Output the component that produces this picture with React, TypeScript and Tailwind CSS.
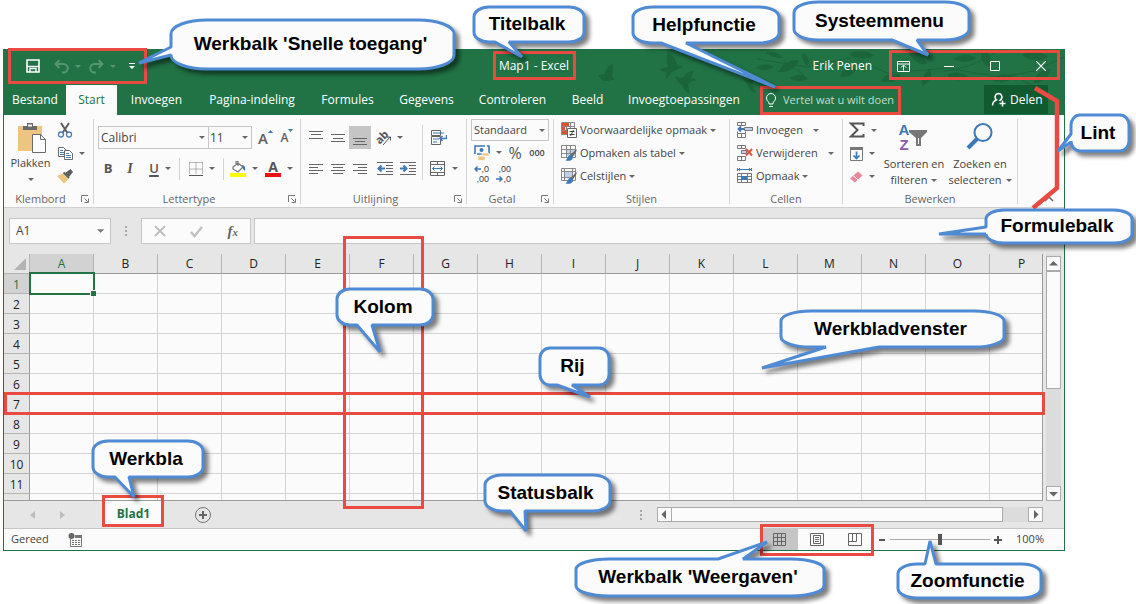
import type { ReactNode } from 'react'

const COLS = 'ABCDEFGHIJKLMNOP'.split('')
const ROWS = Array.from({ length: 11 }, (_, i) => i + 1)

const TABS = [
  { label: 'Bestand', width: 'w-[62px]' },
  { label: 'Start', width: 'w-[51px]' },
  { label: 'Invoegen', width: 'w-[79px]' },
  { label: 'Pagina-indeling', width: 'w-[112px]' },
  { label: 'Formules', width: 'w-[79px]' },
  { label: 'Gegevens', width: 'w-[79px]' },
  { label: 'Controleren', width: 'w-[93px]' },
  { label: 'Beeld', width: 'w-[57px]' },
  { label: 'Invoegtoepassingen', width: 'w-[136px]' },
]

function Caret({ className = 'text-[#666666]' }: { className?: string }) {
  return (
    <svg width="6" height="3" viewBox="0 0 6 3" className={`shrink-0 ${className}`} aria-hidden="true">
      <path d="M0 0h6L3 3z" fill="currentColor" />
    </svg>
  )
}

function Icon({ size = 16, children }: { size?: number; children: ReactNode }) {
  return (
    <svg width={size} height={size} viewBox={`0 0 ${size} ${size}`} fill="none" className="shrink-0" aria-hidden="true">
      {children}
    </svg>
  )
}

/* ---------- title bar and ribbon tabs ---------- */

function Leaves() {
  return (
    <svg
      className="pointer-events-none absolute top-0 right-0"
      width="470"
      height="48"
      viewBox="0 0 470 48"
      fill="#1c653b"
      aria-hidden="true"
    >
      <path d="M4 26c3-1 5 0 7-1 0-4 3-8 8-10-1 4 1 8-1 12l3 4c-5-1-7 2-11 1-3-1-4-4-6-6z" />
      <path d="M65 20c4 0 6-2 9-2-2-5-2-10 0-15 6 5 9 9 9 14 3-1 5 0 6 2-5 0-8 3-11 4-2 2-3 5-6 7 0-3 1-5 0-7-3 0-6-1-7-3z" />
      <path d="M81 27c4 2 6 2 9 1 2-4 6-6 10-6-2 3-2 5-3 7 3 0 5 1 6 3-4-1-7 1-9 3l2 10c-4-2-7-5-8-9-3-2-6-5-7-9z" />
      <path d="M148 29c4 2 6 3 9 1l4 1c-3 2-3 4-2 7l3 6c-4-1-7-4-8-8z" />
      <path d="M172 3c8-1 14 2 17 6-7 0-13-1-17-6zM184 23c5-9 12-12 21-12-3 8-10 13-21 12zM161 19c8-5 14-4 19-1-6 4-12 4-19 1zM196 29c8-5 14-4 18 1-7 3-13 3-18-1zM209 4c-2 6 1 10 5 13 2-6 0-10-5-13z" />
      <path d="M163 10l50 8 45-10M190 12l20 14M258 8l35 16 60-5 70 12" stroke="#1c653b" fill="none" />
      <path d="M255 5c10-5 20-3 25 2-9 4-18 3-25-2zM246 28c2-8 10-12 18-12-2 8-9 13-18 12zM287 32c4-7 12-9 20-6-5 7-13 9-20 6zM315 3c3 9 10 13 18 12-3-8-9-12-18-12z" />
      <path d="M328 37c-1-8 3-14 8-17 3 8 0 13-8 17zM360 10c8-6 16-5 22-1-7 5-15 5-22 1zM353 26c8-5 17-3 22 3-9 4-17 3-22-3zM388 0c-3 9 1 16 8 19 3-8 0-15-8-19zM398 31c6-6 15-7 22-3-6 6-14 7-22 3zM428 6c10-6 19-4 26 2-9 5-18 4-26-2zM440 34c1-9 8-14 17-14-2 9-8 14-17 14z" />
      <path d="M350 22c30-2 50-20 60-22M395 30l45-8 30-14M420 26l24 14" stroke="#1c653b" fill="none" />
    </svg>
  )
}

function TitleBar() {
  return (
    <div className="relative grid h-[34px] grid-cols-[1fr_auto_1fr] items-center">
      <div className="flex items-center pl-[22px] text-[#599475]">
        <button aria-label="Opslaan" className="text-white">
          <Icon size={14}>
            <path d="M1 1h12v12H1z" stroke="currentColor" strokeWidth="1.6" />
            <path d="M1 7.500h12" stroke="currentColor" strokeWidth="1.400" />
            <path d="M4 13v-3.500h6V13" stroke="currentColor" strokeWidth="1.400" />
          </Icon>
        </button>
        <button aria-label="Ongedaan maken" className="ml-[14px] flex items-center gap-[6px]">
          <Icon size={15}>
            <path d="M5.500 1L1.500 5l4 4M2 5h7.500a4 4 0 0 1 0 8.500H8" stroke="currentColor" strokeWidth="2" />
          </Icon>
          <Caret className="text-[#599475]" />
        </button>
        <button aria-label="Opnieuw" className="ml-[8px] flex items-center gap-[6px]">
          <Icon size={15}>
            <path d="M9.500 1l4 4-4 4M13 5H5.500a4 4 0 0 0 0 8.500H7" stroke="currentColor" strokeWidth="2" />
          </Icon>
          <Caret className="text-[#599475]" />
        </button>
        <button aria-label="Werkbalk aanpassen" className="ml-[13px] text-white">
          <svg width="6" height="6" viewBox="0 0 6 6" aria-hidden="true">
            <path d="M0 0h6v1H0zM0 3h6L3 6z" fill="currentColor" />
          </svg>
        </button>
      </div>
      <h1 className="text-[12px] leading-[16px]">Map1 - Excel</h1>
      <div className="flex items-center justify-end">
        <span className="mr-[8px]">Erik Penen</span>
        <button aria-label="Weergaveopties voor lint" className="flex w-[46px] justify-center">
          <Icon size={13}>
            <path d="M.5 1.500h12v10H.5zM.5 4h12M6.500 10.500v-5M4 7.500L6.500 5 9 7.500" stroke="currentColor" />
          </Icon>
        </button>
        <button aria-label="Minimaliseren" className="flex w-[46px] justify-center">
          <Icon size={10}>
            <path d="M0 5.500h10" stroke="currentColor" />
          </Icon>
        </button>
        <button aria-label="Maximaliseren" className="flex w-[46px] justify-center">
          <Icon size={10}>
            <path d="M.5.5h9v9h-9z" stroke="currentColor" />
          </Icon>
        </button>
        <button aria-label="Sluiten" className="flex w-[46px] justify-center">
          <Icon size={10}>
            <path d="M0 0l10 10M10 0L0 10" stroke="currentColor" strokeWidth="1.200" />
          </Icon>
        </button>
      </div>
    </div>
  )
}

function TabBar() {
  return (
    <div className="relative flex h-[32px] items-end">
      {TABS.map(tab => (
        <button
          key={tab.label}
          className={`h-[30px] shrink-0 whitespace-nowrap text-center ${tab.width} ${
            tab.label === 'Start' ? 'bg-[#fbfbfb] text-[#217346]' : ''
          }`}
        >
          {tab.label}
        </button>
      ))}
      <label className="ml-[13px] flex h-[30px] w-[138px] items-center gap-[6px] text-[11px] text-[#c5dccf]">
        <svg width="12" height="15" viewBox="0 0 12 15" fill="none" stroke="#ffffff" className="shrink-0" aria-hidden="true">
          <path d="M4 11V9.500C2 8 1.500 6.500 1.500 5a4.500 4.500 0 0 1 9 0C10.500 6.500 10 8 8 9.500V11zM4 13.500h4" />
        </svg>
        <input
          aria-label="Vertel wat u wilt doen"
          placeholder="Vertel wat u wilt doen"
          className="w-full min-w-0 bg-transparent outline-none placeholder:text-[#c5dccf]"
        />
      </label>
      <button className="mr-[16px] mb-px ml-auto flex h-[29px] w-[64px] items-center gap-[4px] bg-[#115a30] pl-[7px]">
        <Icon size={15}>
          <path
            d="M7.500 1.500a3.500 3.500 0 0 1 2 6.300L8.500 9M7.500 1.500a3.500 3.500 0 0 0-2 6.300C3 9 1.500 11 1.500 13.500M11.500 8.500v6M8.500 11.500h6"
            stroke="currentColor"
            strokeWidth="1.500"
          />
        </Icon>
        Delen
      </button>
    </div>
  )
}

/* ---------- ribbon ---------- */

function Group({
  label,
  width,
  launcher = false,
  children,
}: {
  label: string
  width: string
  launcher?: boolean
  children: ReactNode
}) {
  return (
    <section aria-label={label} className={`flex h-[85px] shrink-0 flex-col border-r border-[#d4d4d4] ${width}`}>
      <div className="h-[75px]">{children}</div>
      <div className="flex h-[10px] items-center text-[11px] leading-[10px] text-[#666666]">
        <span className="flex-1 text-center">{label}</span>
        {launcher && (
          <button aria-label={`${label} instellingen`} className="w-[16px] pl-[4px]">
            <Icon size={8}>
              <path d="M.5 7V.5H7M3.500 3.500l3 3M7.500 3.500v4h-4" stroke="#777777" />
            </Icon>
          </button>
        )}
      </div>
    </section>
  )
}

function IconButton({
  label,
  caret = false,
  active = false,
  width = 'w-[22px]',
  children,
}: {
  label: string
  caret?: boolean
  active?: boolean
  width?: string
  children: ReactNode
}) {
  return (
    <button
      aria-label={label}
      className={`flex h-[23px] shrink-0 items-center justify-center gap-[6px] ${width} ${active ? 'bg-[#c5c5c5]' : ''}`}
    >
      {children}
      {caret && <Caret />}
    </button>
  )
}

function Divider() {
  return <span className="h-[22px] w-px shrink-0 bg-[#d4d4d4]" />
}

function ClipboardGroup() {
  return (
    <Group label="Klembord" width="w-[90px]" launcher>
      <div className="flex">
        <button className="flex w-[53px] flex-col items-center pt-[3px]">
          <Icon size={32}>
            <path d="M3 4h24v25H3z" fill="#edc580" />
            <path d="M8 8V4h4V1h6v3h4v4z" fill="#6a6a6a" />
            <path d="M13 2.500h4v2h-4z" fill="#fbfbfb" />
            <path d="M17.500 12.500h8l5 5v13h-13z" fill="#fbfbfb" stroke="#6a6a6a" />
            <path d="M25.500 12.500v5h5" stroke="#6a6a6a" />
          </Icon>
          <span className="leading-[18px]">Plakken</span>
          <span className="mt-[6px]">
            <Caret />
          </span>
        </button>
        <div className="flex flex-col gap-px">
          <button aria-label="Knippen" className="flex h-[22px] items-center">
            <Icon>
              <path d="M4 1l6.500 10M12 1L5.500 11" stroke="#5f5f5f" strokeWidth="2" />
              <circle cx="4" cy="12.500" r="2.500" stroke="#4a7ebb" strokeWidth="1.300" />
              <circle cx="12" cy="12.500" r="2.500" stroke="#4a7ebb" strokeWidth="1.300" />
            </Icon>
          </button>
          <button aria-label="Kopiëren" className="flex h-[22px] items-center gap-[6px]">
            <Icon>
              <path d="M1.500 2.500h5l3 3v6h-8z" stroke="#6a6a6a" fill="#fff" />
              <path d="M3 5.500h3M3 7.500h4M3 9.500h4" stroke="#4a7ebb" />
              <path d="M7.500 5.500h5l3 3v6h-8z" stroke="#6a6a6a" fill="#fff" />
              <path d="M9 8.500h3M9 10.500h5M9 12.500h5" stroke="#4a7ebb" />
            </Icon>
            <Caret />
          </button>
          <button aria-label="Opmaak kopiëren" className="flex h-[22px] items-center">
            <Icon>
              <path d="M8 5l4 4 4-5-2.500-3z" fill="#5f5f5f" />
              <path d="M6.500 4.500l5.500 5.500" stroke="#5f5f5f" strokeWidth="2" />
              <path d="M6 5.500l5.500 5.500L7 15.500 0 8z" fill="#edc580" />
            </Icon>
          </button>
        </div>
      </div>
    </Group>
  )
}

function FontGroup() {
  return (
    <Group label="Lettertype" width="w-[207px]" launcher>
      <div className="flex items-center pt-[7px] pl-[4px]">
        <div className="relative">
          <select
            aria-label="Lettertype"
            className="h-[23px] w-[111px] appearance-none border border-[#c6c6c6] bg-[#fbfbfb] pl-[2px] text-[12px]"
          >
            <option>Calibri</option>
          </select>
          <span className="pointer-events-none absolute top-[10px] right-[4px]">
            <Caret />
          </span>
        </div>
        <div className="relative -ml-px">
          <select
            aria-label="Tekengrootte"
            className="h-[23px] w-[44px] appearance-none border border-[#c6c6c6] bg-[#fbfbfb] pl-[1px] text-[12px]"
          >
            <option>11</option>
          </select>
          <span className="pointer-events-none absolute top-[10px] right-[4px]">
            <Caret />
          </span>
        </div>
        <button aria-label="Tekengrootte vergroten" className="ml-[6px] flex w-[20px] items-start text-[15px] leading-[20px] font-semibold text-[#5f5f5f]">
          A
          <svg width="5" height="3" viewBox="0 0 5 3" className="mt-[2px]">
            <path d="M0 3h5L2.500 0z" fill="#3d78b8" />
          </svg>
        </button>
        <button aria-label="Tekengrootte verkleinen" className="ml-[3px] flex w-[20px] items-start text-[12px] leading-[22px] font-semibold text-[#5f5f5f]">
          A
          <svg width="5" height="3" viewBox="0 0 5 3" className="mt-[2px]">
            <path d="M0 0h5L2.500 3z" fill="#3d78b8" />
          </svg>
        </button>
      </div>
      <div className="flex items-center pt-[8px] pl-[3px] text-[13px] text-[#555555]">
        <IconButton label="Vet">
          <b>B</b>
        </IconButton>
        <IconButton label="Cursief">
          <i className="font-['Liberation_Serif'] text-[14px] font-bold">I</i>
        </IconButton>
        <IconButton label="Onderstrepen" caret width="w-[38px]">
          <u className="font-semibold decoration-2 underline-offset-2">U</u>
        </IconButton>
        <Divider />
        <IconButton label="Randen" caret width="w-[43px]">
          <Icon size={14}>
            <path d="M.5.5h13M.5 7h13M.5.5v12M7 .5v12M13.500.5v12" stroke="#777777" strokeDasharray="1 1" />
            <path d="M0 13.500h14" stroke="#555555" />
          </Icon>
        </IconButton>
        <Divider />
        <IconButton label="Opvulkleur" caret width="w-[40px]">
          <Icon size={16}>
            <path d="M3 6l5-4 5 4-5 5-5-3zM6 4V.5h2V5" stroke="#777777" strokeWidth="1.200" />
            <path d="M12 4c3 0 3.500 3 3 6l-2-2z" fill="#3d78b8" />
            <path d="M0 12h16v4H0z" fill="#ffff00" />
          </Icon>
        </IconButton>
        <IconButton label="Tekstkleur" caret width="w-[30px]">
          <span className="border-b-4 border-[#ee1111] px-[3px] text-[14px] leading-[13px] font-bold">A</span>
        </IconButton>
      </div>
    </Group>
  )
}

function Lines({ d }: { d: string }) {
  return (
    <Icon size={14}>
      <path d={d} stroke="#666666" />
    </Icon>
  )
}

function AlignmentGroup() {
  return (
    <Group label="Uitlijning" width="w-[166px]" launcher>
      <div className="flex h-full">
        <div className="flex flex-col gap-[8px] pt-[7px] pl-[4px]">
          <div className="flex">
            <IconButton label="Boven uitlijnen">
              <Lines d="M0 .5h14M2 3.500h10M0 7.500h14" />
            </IconButton>
            <IconButton label="Midden uitlijnen">
              <Lines d="M0 3.500h14M2 7.500h10M0 10.500h14" />
            </IconButton>
            <IconButton label="Onder uitlijnen" active>
              <Lines d="M0 7.500h14M2 10.500h10M0 13.500h14" />
            </IconButton>
            <IconButton label="Afdrukstand" caret width="w-[36px]">
              <span className="flex items-center">
                <span className="-rotate-45 text-[11px] font-bold text-[#555555]">ab</span>
                <svg width="8" height="12" viewBox="0 0 8 12" fill="none" stroke="#555555" className="-ml-[5px] mt-[4px]">
                  <path d="M0 11l7-8M4 3h3.500v3.500" />
                </svg>
              </span>
            </IconButton>
          </div>
          <div className="flex">
            <IconButton label="Links uitlijnen">
              <Lines d="M0 2.500h14M0 5.500h9M0 8.500h14M0 11.500h9" />
            </IconButton>
            <IconButton label="Centreren">
              <Lines d="M0 2.500h14M2 5.500h10M0 8.500h14M2 11.500h10" />
            </IconButton>
            <IconButton label="Rechts uitlijnen">
              <Lines d="M0 2.500h14M5 5.500h9M0 8.500h14M5 11.500h9" />
            </IconButton>
            <IconButton label="Inspringing verkleinen" width="w-[28px]">
              <Icon>
                <path d="M0 1.500h16M9 4.500h7M9 7.500h7M9 10.500h7M0 13.500h16" stroke="#666666" />
                <path d="M8 7.500H2M4.500 4.500l-3 3 3 3" stroke="#3d78b8" strokeWidth="2" />
              </Icon>
            </IconButton>
            <IconButton label="Inspringing vergroten" width="w-[18px]">
              <Icon>
                <path d="M0 1.500h16M9 4.500h7M9 7.500h7M9 10.500h7M0 13.500h16" stroke="#666666" />
                <path d="M0 7.500h6M3.500 4.500l3 3-3 3" stroke="#3d78b8" strokeWidth="2" />
              </Icon>
            </IconButton>
          </div>
        </div>
        <span className="mt-[6px] ml-[5px] h-[55px] w-px bg-[#d4d4d4]" />
        <div className="flex flex-col gap-[8px] pt-[7px] pl-[7px]">
          <IconButton label="Tekstterugloop" width="w-[17px]">
            <Icon>
              <path d="M.5.5h9v5h-9zM.5 6.500h9v8h-9z" stroke="#666666" />
              <path d="M2 3h11M2 9h6M2 12h4" stroke="#3d78b8" />
              <path d="M15.500 5v3.500H9M11.500 6L9 8.500l2.500 2.500" stroke="#3d78b8" strokeWidth="1.500" />
            </Icon>
          </IconButton>
          <IconButton label="Samenvoegen en centreren" caret width="w-[28px]">
            <Icon>
              <path d="M.5.5h14v14H.5zM.5 3.500h14M.5 11.500h14M7.500.5v3M7.500 11.500v3" stroke="#666666" />
              <path d="M2.500 7.500h10M4.500 5.500l-2 2 2 2M10.500 5.500l2 2-2 2" stroke="#3d78b8" />
            </Icon>
          </IconButton>
        </div>
      </div>
    </Group>
  )
}

function NumberGroup() {
  return (
    <Group label="Getal" width="w-[87px]" launcher>
      <div className="relative ml-[4px] w-[78px]">
        <select aria-label="Getalnotatie" className="h-[22px] w-full appearance-none border border-[#c6c6c6] bg-[#fbfbfb] pl-[2px]">
          <option>Standaard</option>
        </select>
        <span className="pointer-events-none absolute top-[10px] right-[4px]">
          <Caret />
        </span>
      </div>
      <div className="flex items-center pl-[6px]">
        <IconButton label="Financiële notatie" caret width="w-[30px]">
          <Icon>
            <path d="M1 1h14v8H1z" stroke="#3d78b8" strokeWidth="1.600" strokeDasharray="10 2" />
            <circle cx="7.500" cy="5" r="2" fill="#3d78b8" />
            <path d="M8 8h7v3H8zM4 11h7v4.500H4z" fill="#edc580" stroke="#fbfbfb" strokeWidth=".7" />
          </Icon>
        </IconButton>
        <IconButton label="Procentnotatie" width="w-[24px]">
          <span className="text-[16px] text-[#555555]">%</span>
        </IconButton>
        <IconButton label="Duizendtalnotatie" width="w-[20px]">
          <span className="text-[9px] font-semibold">000</span>
        </IconButton>
      </div>
      <div className="flex pl-[4px] font-['Liberation_Sans',Arial,sans-serif] text-[9px] leading-[10px]">
        <button aria-label="Meer decimalen" className="flex w-[18px] flex-col items-end">
          <span className="flex items-center">
            <svg width="7" height="6" viewBox="0 0 7 6" fill="none" stroke="#3d78b8" strokeWidth="1.500">
              <path d="M7 3H1M3.500.5L1 3l2.500 2.500" />
            </svg>
            ,0
          </span>
          <span>,00</span>
        </button>
        <button aria-label="Minder decimalen" className="ml-[4px] flex w-[18px] flex-col items-end">
          <span>,00</span>
          <span className="flex items-center">
            <svg width="7" height="6" viewBox="0 0 7 6" fill="none" stroke="#3d78b8" strokeWidth="1.500">
              <path d="M0 3h6M3.500.5L6 3 3.500 5.500" />
            </svg>
            ,0
          </span>
        </button>
      </div>
    </Group>
  )
}

function MenuRow({ label, gap = 'gap-[3px]', children }: { label: string; gap?: string; children: ReactNode }) {
  return (
    <button className={`flex h-[22px] items-center whitespace-nowrap text-[#444444] ${gap}`}>
      <span className="flex items-center gap-[3px]">
        {children}
        {label}
      </span>
      <Caret />
    </button>
  )
}

function Brush() {
  return (
    <>
      <path d="M15.500 4l-6 6 2 2 4-6z" fill="#666666" />
      <path d="M8.500 10c3 0 4 2 3 4-1.500 2-4 2-7 1.500 2-1 2-4.500 4-5.500z" fill="#3d78b8" />
    </>
  )
}

function StylesGroup() {
  return (
    <Group label="Stijlen" width="w-[176px]">
      <div className="flex flex-col gap-px pl-[7px]">
        <MenuRow label="Voorwaardelijke opmaak">
          <Icon>
            <path d="M.5.5h13v12H.5zM.5 4.500h13M.5 8.500h13M5.500.5v12M9.500.5v12" stroke="#888888" />
            <path d="M1 1h7v3H1zM1 5h3v3H1zM1 9h5v3H1z" fill="#d95532" />
            <path d="M6.500 6.500h9v9h-9z" fill="#fbfbfb" stroke="#666666" />
            <path d="M8.500 9.500h5M8.500 12.500h5M12.500 8l-3 6" stroke="#444444" />
          </Icon>
        </MenuRow>
        <MenuRow label="Opmaken als tabel">
          <Icon>
            <path d="M5 4h9v7H5z" fill="#bfd2ea" />
            <path d="M.5.5h14v12H.5zM.5 4.500h14M.5 8.500h14M5.500.5v12M9.500.5v12" stroke="#888888" />
            <Brush />
          </Icon>
        </MenuRow>
        <MenuRow label="Celstijlen">
          <Icon>
            <path d="M4 4h7v6H4z" fill="#bfd2ea" />
            <path d="M.5.5h14v12H.5zM.5 3.500h14M3.500.5v12M11.500.5v12M.5 9.500h11" stroke="#888888" />
            <Brush />
          </Icon>
        </MenuRow>
      </div>
    </Group>
  )
}

function CellsGroup() {
  return (
    <Group label="Cellen" width="w-[113px]">
      <div className="flex flex-col gap-px pl-[7px]">
        <MenuRow label="Invoegen" gap="gap-[10px]">
          <Icon>
            <path d="M.5.5h8v3h-8zM4.500.5v3M.5 11.500h8v4h-8zM4.500 11.500v4M.5 11.500v-2M8.500 11.500v-2" stroke="#777777" />
            <path d="M7.500 5.500h8v3h-8z" fill="#bfd2ea" stroke="#777777" />
            <path d="M7 7H1.500M4 4.500L1.500 7 4 9.500" stroke="#3d78b8" strokeWidth="1.800" />
          </Icon>
        </MenuRow>
        <MenuRow label="Verwijderen" gap="gap-[10px]">
          <Icon>
            <path d="M.5.5h8v3h-8zM4.500.5v3M.5 11.500h8v4h-8zM4.500 11.500v4" stroke="#777777" />
            <path d="M4.500 5.500h5v3h-5z" fill="#bfd2ea" stroke="#777777" />
            <path d="M9 4l6 6.500M15 4l-6 6.500" stroke="#e0533d" strokeWidth="2" />
          </Icon>
        </MenuRow>
        <MenuRow label="Opmaak">
          <Icon>
            <path d="M1 1.500h13M3 0L1.500 1.500 3 3M12 0l1.500 1.500L12 3M.5 0v3M14.500 0v3" stroke="#3d78b8" />
            <path d="M.5 5.500h14v9H.5zM.5 8.500h14M.5 11.500h14M4.500 5.500v9M10.500 5.500v9" stroke="#777777" />
            <path d="M4 8h6v4H4z" fill="#3d78b8" />
          </Icon>
        </MenuRow>
      </div>
    </Group>
  )
}

function EditGroup() {
  return (
    <Group label="Bewerken" width="w-[175px]">
      <div className="flex">
        <div className="flex flex-col gap-px pl-[6px]">
          <button aria-label="AutoSom" className="flex h-[22px] items-center gap-[6px]">
            <Icon>
              <path d="M14.500 4V1.500H2L8.500 8 2 14.500h12.500V12" stroke="#555555" strokeWidth="2" />
            </Icon>
            <Caret />
          </button>
          <button aria-label="Doorvoeren" className="flex h-[22px] items-center gap-[5px]">
            <Icon size={15}>
              <path d="M1.500 1.500h12v13h-12z" stroke="#777777" />
              <path d="M1 1h13v3H1z" fill="#777777" />
              <path d="M7.500 5.500v7M4.500 9.500l3 3 3-3" stroke="#3d78b8" strokeWidth="1.700" />
            </Icon>
            <Caret />
          </button>
          <button aria-label="Wissen" className="flex h-[22px] items-center gap-[5px]">
            <Icon size={15}>
              <path d="M9 2.500l4.500 4L6 13.500 1 9.500z" fill="#e8879a" />
              <path d="M4 6.500l5 4.500" stroke="#fbfbfb" />
            </Icon>
            <Caret />
          </button>
        </div>
        <button className="ml-[4px] flex w-[66px] flex-col items-center whitespace-nowrap pt-[3px]">
          <span className="flex h-[34px] items-start pr-[2px]">
            <span className="flex flex-col font-['Liberation_Sans',Arial,sans-serif] text-[15px] leading-[15px] font-bold">
              <span className="text-[#3d78b8]">A</span>
              <span className="text-[#8b57b0]">Z</span>
            </span>
            <svg width="18" height="24" viewBox="0 0 18 24" className="mt-[4px]" aria-hidden="true">
              <path d="M0 4h18v2l-6 6v8H7v-8L0 6z" fill="#777777" />
              <path d="M9 12v6h1v-6z" fill="#fbfbfb" />
            </svg>
          </span>
          <span className="leading-[16px]">Sorteren en</span>
          <span className="flex items-center gap-[4px] leading-[16px]">
            filteren <Caret />
          </span>
        </button>
        <button className="flex w-[66px] flex-col items-center whitespace-nowrap pt-[3px]">
          <span className="h-[34px]">
            <Icon size={32}>
              <circle cx="19" cy="10.500" r="8.500" stroke="#3d78b8" strokeWidth="2" />
              <path d="M13 17l-9 9" stroke="#3d78b8" strokeWidth="4" />
            </Icon>
          </span>
          <span className="leading-[16px]">Zoeken en</span>
          <span className="flex items-center gap-[4px] leading-[16px]">
            selecteren <Caret />
          </span>
        </button>
      </div>
    </Group>
  )
}

function Ribbon() {
  return (
    <div className="flex h-[93px] border-b border-[#d0d0d0] bg-[#fbfbfb] pt-[4px] text-[11px] text-[#444444]">
      <ClipboardGroup />
      <FontGroup />
      <AlignmentGroup />
      <NumberGroup />
      <StylesGroup />
      <CellsGroup />
      <EditGroup />
      <button aria-label="Lint samenvouwen" className="mr-[10px] mb-[5px] ml-auto self-end">
        <svg width="10" height="6" viewBox="0 0 10 6" fill="none" stroke="#666666" strokeWidth="1.500">
          <path d="M1 5l4-4 4 4" />
        </svg>
      </button>
    </div>
  )
}

/* ---------- formula bar and sheet ---------- */

function Dots() {
  return (
    <svg width="2" height="10" viewBox="0 0 2 10" fill="#a8a8a8" className="shrink-0" aria-hidden="true">
      <path d="M0 0h2v2H0zM0 4h2v2H0zM0 8h2v2H0z" />
    </svg>
  )
}

function FormulaBar() {
  return (
    <div className="flex items-center py-[10px] pr-[4px] pl-[5px]">
      <div className="flex h-[26px] w-[102px] items-center border border-[#c6c6c6] bg-[#fbfbfb] pr-[6px] pl-[6px]">
        <input aria-label="Naamvak" defaultValue="A1" className="w-full min-w-0 bg-transparent text-[12px] text-[#444444] outline-none" />
        <svg width="8" height="4" viewBox="0 0 8 4" aria-hidden="true">
          <path d="M0 0h8L4 4z" fill="#777777" />
        </svg>
      </div>
      <span className="flex w-[30px] justify-center">
        <Dots />
      </span>
      <div className="flex h-[26px] w-[110px] items-center justify-around border border-[#c6c6c6] bg-[#fbfbfb]">
        <button aria-label="Annuleren">
          <Icon size={12}>
            <path d="M1 1l10 10M11 1L1 11" stroke="#bdbdbd" strokeWidth="1.800" />
          </Icon>
        </button>
        <button aria-label="Invoeren">
          <Icon size={13}>
            <path d="M1 7l3.500 4L12 2" stroke="#c2c2c2" strokeWidth="2.500" />
          </Icon>
        </button>
        <button aria-label="Functie invoegen" className="font-['Liberation_Serif'] text-[15px] leading-none font-bold text-[#666666] italic">
          f<span className="text-[11px]">x</span>
        </button>
      </div>
      <input aria-label="Formulebalk" className="ml-[3px] h-[26px] min-w-0 flex-1 border border-[#c6c6c6] bg-[#fbfbfb] px-1 outline-none" />
    </div>
  )
}

function Sheet() {
  return (
    <div className="min-w-0 flex-1 overflow-hidden border-r border-b border-[#9b9b9b]">
      <table className="w-full table-fixed border-separate border-spacing-0 text-[12px] text-[#222222]">
        <thead>
          <tr className="h-[20px]">
            <th className="w-[26px] border-r border-b border-[#b4b4b4] p-0">
              <svg width="12" height="12" viewBox="0 0 12 12" className="ml-[10px]" aria-hidden="true">
                <path d="M12 0v12H0z" fill="#b4b4b4" />
              </svg>
            </th>
            {COLS.map(col => (
              <th
                key={col}
                scope="col"
                className={`border-b py-0 pr-0 leading-[18px] font-normal ${
                  col === 'P' ? 'pl-[11px]' : 'w-[64px] border-r border-r-[#b4b4b4] pl-0'
                } ${col === 'A' ? 'border-b-[#217346] bg-[#d2d2d2] text-[#217346]' : 'border-b-[#9b9b9b]'}`}
              >
                {col}
              </th>
            ))}
          </tr>
        </thead>
        <tbody>
          {ROWS.map(row => (
            <tr key={row} className="h-[20px]">
              <th
                scope="row"
                className={`border-r border-b border-r-[#9b9b9b] border-b-[#b4b4b4] px-0 pt-[2px] pb-0 leading-[17px] font-normal ${
                  row === 1 ? 'bg-[#d2d2d2] text-[#217346]' : ''
                }`}
              >
                {row}
              </th>
              {COLS.map(col => (
                <td key={col} className={`border-b border-[#d4d4d4] bg-[#fbfbfb] p-0 ${col === 'P' ? '' : 'border-r'}`}>
                  {row === 1 && col === 'A' && (
                    <div className="relative">
                      <div className="absolute -top-[12px] -left-[1px] h-[23px] w-[66px] border-2 border-[#217346]">
                        <span className="absolute -right-[3px] -bottom-[3px] h-[6px] w-[6px] border-t border-l border-white bg-[#217346]" />
                      </div>
                    </div>
                  )}
                </td>
              ))}
            </tr>
          ))}
          <tr className="h-[6px]">
            <th className="border-r border-[#9b9b9b] p-0" />
            {COLS.map(col => (
              <td key={col} className={`border-[#d4d4d4] bg-[#fbfbfb] p-0 ${col === 'P' ? '' : 'border-r'}`} />
            ))}
          </tr>
        </tbody>
      </table>
    </div>
  )
}

function ScrollButton({ label, d }: { label: string; d: string }) {
  return (
    <button aria-label={label} className="flex h-[15px] w-[15px] shrink-0 items-center justify-center border border-[#ababab] bg-[#fbfbfb]">
      <svg width="9" height="9" viewBox="0 0 9 9" fill="#666666" aria-hidden="true">
        <path d={d} />
      </svg>
    </button>
  )
}

function SheetTabs() {
  return (
    <div className="flex h-[28px] items-center border-b border-[#c6c6c6]">
      <div className="flex h-full flex-[653] items-center">
        <button aria-label="Vorig blad" className="ml-[26px]">
          <svg width="5" height="8" viewBox="0 0 5 8" fill="#bdbdbd">
            <path d="M5 0v8L0 4z" />
          </svg>
        </button>
        <button aria-label="Volgend blad" className="ml-[25px]">
          <svg width="5" height="8" viewBox="0 0 5 8" fill="#bdbdbd">
            <path d="M0 0v8l5-4z" />
          </svg>
        </button>
        <button className="mb-[2px] ml-[40px] h-[25px] w-[57px] border-b-2 border-[#217346] bg-[#fbfbfb] pt-[2px] text-[12px] font-bold text-[#217346]">
          Blad1
        </button>
        <button aria-label="Nieuw blad" className="ml-[32px]">
          <Icon size={18}>
            <circle cx="9" cy="9" r="7.500" stroke="#777777" />
            <path d="M9 5v8M5 9h8" stroke="#666666" strokeWidth="2" />
          </Icon>
        </button>
        <span className="mr-[15px] ml-auto">
          <Dots />
        </span>
      </div>
      <div className="flex flex-[386] bg-[#dcdcdc]">
        <ScrollButton label="Naar links" d="M6 0v9L1.500 4.500z" />
        <span className="-ml-px h-[15px] flex-1 border border-[#ababab] bg-[#fbfbfb]" />
        <span className="w-[25px]" />
        <ScrollButton label="Naar rechts" d="M3 0v9l4.500-4.500z" />
      </div>
      <span className="w-[21px] shrink-0" />
    </div>
  )
}

function StatusBar() {
  return (
    <div className="flex h-[21px] items-center bg-[#fbfbfb] text-[11px] text-[#444444]">
      <span className="ml-[7px] w-[57px]">Gereed</span>
      <button aria-label="Macro opnemen">
        <Icon size={14}>
          <path d="M2.500 6v7.500h11v-11H7" stroke="#777777" />
          <path d="M7 2h7v3H7z" fill="#777777" />
          <circle cx="3.500" cy="3" r="3" fill="#666666" />
          <path d="M4 7.500h8M4 9.500h8M4 11.500h8" stroke="#777777" strokeDasharray="2 1" />
        </Icon>
      </button>
      <div className="ml-auto flex h-full items-center">
        <button aria-label="Normaal" className="flex h-full w-[38px] items-center justify-center bg-[#c5c5c5]">
          <Icon size={13}>
            <path d="M.5.5h12v12H.5zM.5 4.500h12M.5 8.500h12M4.500.5v12M8.500.5v12" stroke="#666666" />
          </Icon>
        </button>
        <button aria-label="Pagina-indeling" className="flex h-full w-[38px] items-center justify-center">
          <Icon size={14}>
            <path d="M.5.5h13v12H.5zM3.500 2.500h7v8h-7zM5 4.500h4M5 6.500h4M5 8.500h4" stroke="#666666" />
          </Icon>
        </button>
        <button aria-label="Pagina-eindevoorbeeld" className="flex h-full w-[38px] items-center justify-center">
          <Icon size={14}>
            <path d="M.5.5h13v12H.5zM.5 8.500h8M8.500.5v8M4.500.5v8" stroke="#666666" />
          </Icon>
        </button>
        <button aria-label="Uitzoomen" className="flex w-[16px] justify-center">
          <Icon size={8}>
            <path d="M1 4h6" stroke="#555555" strokeWidth="2" />
          </Icon>
        </button>
        <input
          type="range"
          aria-label="Zoomen"
          min="10"
          max="190"
          defaultValue="100"
          className="h-[11px] w-[100px] appearance-none bg-[linear-gradient(#aaaaaa,#aaaaaa)] bg-[length:100%_1px] bg-center bg-no-repeat [&::-webkit-slider-thumb]:h-[11px] [&::-webkit-slider-thumb]:w-[4px] [&::-webkit-slider-thumb]:appearance-none [&::-webkit-slider-thumb]:bg-[#555555]"
        />
        <button aria-label="Inzoomen" className="flex w-[16px] justify-center">
          <Icon size={8}>
            <path d="M0 4h8M4 0v8" stroke="#555555" strokeWidth="2" />
          </Icon>
        </button>
        <span className="mr-[20px] ml-[10px]">100%</span>
      </div>
    </div>
  )
}

/* ---------- annotations laid over the window ---------- */

const FRAMES = [
  'left-[8px] top-[48px] w-[139px] h-[36px]',
  'left-[493px] top-[51px] w-[83px] h-[29px]',
  'left-[889px] top-[50px] w-[171px] h-[30px]',
  'left-[760px] top-[86px] w-[141px] h-[29px]',
  'left-[343px] top-[236px] w-[81px] h-[273px]',
  'left-[4px] top-[392px] w-[1041px] h-[23px]',
  'left-[102px] top-[495px] w-[62px] h-[32px]',
  'left-[760px] top-[524px] w-[114px] h-[32px]',
]

type Point = [number, number]

interface Bubble {
  text: string
  place: string
  w: number
  h: number
  rx: number
  side: 'top' | 'bottom' | 'left'
  // tail: where it leaves the edge, its tip, where it joins the edge again
  from: number
  to: number
  tip: Point
}

const BUBBLES: Bubble[] = [
  { text: "Werkbalk 'Snelle toegang'", place: 'left-[171px] top-[20px]', w: 283, h: 49, rx: 36, side: 'left', from: 27, to: 35, tip: [-32, 43] },
  { text: 'Titelbalk', place: 'left-[474px] top-[7px]', w: 110, h: 35, rx: 15, side: 'bottom', from: 21, to: 35, tip: [48, 50] },
  { text: 'Helpfunctie', place: 'left-[633px] top-[7px]', w: 146, h: 36, rx: 20, side: 'bottom', from: 28, to: 53, tip: [142, 80] },
  { text: 'Systeemmenu', place: 'left-[794px] top-[2px]', w: 175, h: 38, rx: 24, side: 'bottom', from: 98, to: 123, tip: [134, 53] },
  { text: 'Lint', place: 'left-[1071px] top-[115px]', w: 58, h: 36, rx: 9, side: 'left', from: 19, to: 27, tip: [-13, 36] },
  { text: 'Formulebalk', place: 'left-[986px] top-[210px]', w: 146, h: 33, rx: 18, side: 'left', from: 17, to: 24, tip: [-47, 24] },
  { text: 'Kolom', place: 'left-[337px] top-[289px]', w: 96, h: 36, rx: 13, side: 'bottom', from: 20, to: 35, tip: [43, 63] },
  { text: 'Rij', place: 'left-[540px] top-[348px]', w: 69, h: 37, rx: 10, side: 'bottom', from: 17, to: 32, tip: [50, 49] },
  { text: 'Werkbladvenster', place: 'left-[781px] top-[311px]', w: 223, h: 36, rx: 30, side: 'bottom', from: 45, to: 98, tip: [-19, 57] },
  { text: 'Werkbla', place: 'left-[93px] top-[441px]', w: 110, h: 36, rx: 15, side: 'bottom', from: 22, to: 36, tip: [41, 56] },
  { text: 'Statusbalk', place: 'left-[485px] top-[475px]', w: 125, h: 36, rx: 17, side: 'bottom', from: 25, to: 40, tip: [41, 56] },
  { text: "Werkbalk 'Weergaven'", place: 'left-[576px] top-[559px]', w: 248, h: 37, rx: 33, side: 'top', from: 142, to: 167, tip: [191, -17] },
  { text: 'Zoomfunctie', place: 'left-[898px] top-[564px]', w: 143, h: 34, rx: 19, side: 'top', from: 27, to: 38, tip: [32, -23] },
]

function bubblePath({ w, h, rx, side, from, to, tip }: Bubble) {
  const ry = h * 0.28
  const [tx, ty] = tip
  const arc = `A${rx} ${ry} 0 0 1`
  const top = side === 'top' ? `H${from}L${tx} ${ty}L${to} 0` : ''
  const bottom = side === 'bottom' ? `H${to}L${tx} ${ty}L${from} ${h}` : ''
  const left = side === 'left' ? `V${to}L${tx} ${ty}L0 ${from}` : ''
  return `M${rx} 0${top}H${w - rx}${arc} ${w} ${ry}V${h - ry}${arc} ${w - rx} ${h}${bottom}H${rx}${arc} 0 ${h - ry}${left}V${ry}${arc} ${rx} 0Z`
}

function Callout({ bubble }: { bubble: Bubble }) {
  return (
    <div className={`absolute ${bubble.place}`}>
      <svg
        width={bubble.w}
        height={bubble.h}
        className="block overflow-visible drop-shadow-[4px_4px_2px_rgba(0,0,0,0.5)]"
        aria-hidden="true"
      >
        <path d={bubblePath(bubble)} fill="#fbfbfb" stroke="#4f8bd4" strokeWidth="3" strokeLinejoin="bevel" />
      </svg>
      <span className="absolute inset-0 flex items-center justify-center pr-[4px] font-['Liberation_Sans',Arial,sans-serif] text-[19px] font-bold whitespace-nowrap text-black">
        {bubble.text}
      </span>
    </div>
  )
}

export default function App() {
  return (
    <div className="relative overflow-hidden bg-white pt-[49px] pr-[71px] pb-[53px] pl-[3px] font-['Open_Sans','Noto_Sans',sans-serif] text-[12px]">
      <main className="border-x border-b border-[#217346] bg-[#e6e6e6]">
        <header className="relative bg-[#217346] text-white">
          <Leaves />
          <TitleBar />
          <TabBar />
        </header>
        <Ribbon />
        <FormulaBar />
        <div className="flex">
          <Sheet />
          <div className="mx-[3px] flex w-[15px] shrink-0 flex-col bg-[#dcdcdc] pt-[2px]">
            <ScrollButton label="Omhoog" d="M0 6.500h9L4.500 2z" />
            <span className="h-[118px] border border-[#ababab] bg-[#fbfbfb]" />
            <span className="flex-1" />
            <ScrollButton label="Omlaag" d="M0 3h9L4.500 7.500z" />
          </div>
        </div>
        <SheetTabs />
        <StatusBar />
      </main>

      {FRAMES.map(frame => (
        <div key={frame} className={`pointer-events-none absolute border-3 border-[#e94b43] ${frame}`} />
      ))}
      <svg className="pointer-events-none absolute top-[85px] left-[1030px]" width="32" height="126" viewBox="0 0 32 126" fill="none" aria-hidden="true">
        <path d="M5 3l22 13v87L3 123" stroke="#e94b43" strokeWidth="4.500" />
      </svg>
      {BUBBLES.map(bubble => (
        <Callout key={bubble.text} bubble={bubble} />
      ))}
    </div>
  )
}
